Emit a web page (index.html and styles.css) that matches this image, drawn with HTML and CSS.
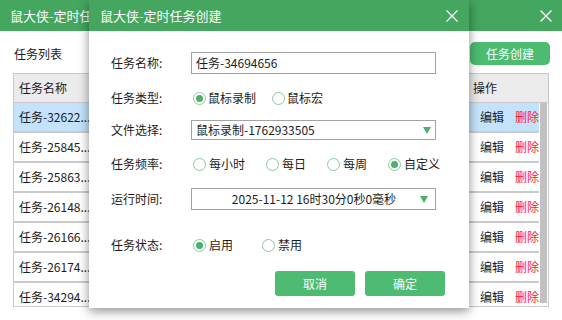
FILE: index.html
```html
<!DOCTYPE html>
<html lang="zh-CN">
<head>
  <meta charset="UTF-8" />
  <meta name="viewport" content="width=device-width, initial-scale=1.0">
  <title>鼠大侠-定时任务</title>
  <link rel="stylesheet" href="styles.css">
</head>

<body>

  <div class="window">
    <div class="titlebar">
      <span>鼠大侠-定时任务</span>
      <svg class="close" viewBox="0 0 12 12"><path d="M0.5 0.5 L11.5 11.5 M11.5 0.5 L0.5 11.5" /></svg>
    </div>

    <div class="toolbar">
      <span>任务列表</span>
      <button class="btn btn-create">任务创建</button>
    </div>

    <div class="table">
      <div class="thead">
        <div class="cell name">任务名称</div>
        <div class="cell ops">操作</div>
      </div>
      <div class="tbody">
        <div class="rows">
          <div class="row selected"><div class="cell name">任务-32622...</div><div class="cell ops"><span>编辑</span><span class="del">删除</span></div></div>
          <div class="row"><div class="cell name">任务-25845...</div><div class="cell ops"><span>编辑</span><span class="del">删除</span></div></div>
          <div class="row"><div class="cell name">任务-25863...</div><div class="cell ops"><span>编辑</span><span class="del">删除</span></div></div>
          <div class="row"><div class="cell name">任务-26148...</div><div class="cell ops"><span>编辑</span><span class="del">删除</span></div></div>
          <div class="row"><div class="cell name">任务-26166...</div><div class="cell ops"><span>编辑</span><span class="del">删除</span></div></div>
          <div class="row"><div class="cell name">任务-26174...</div><div class="cell ops"><span>编辑</span><span class="del">删除</span></div></div>
          <div class="row"><div class="cell name">任务-34294...</div><div class="cell ops"><span>编辑</span><span class="del">删除</span></div></div>
        </div>
        <div class="scrollbar"><div class="thumb"></div></div>
      </div>
    </div>
  </div>

  <!-- create dialog -->
  <div class="dialog">
    <div class="titlebar dialog-head">
      <span>鼠大侠-定时任务创建</span>
      <svg class="close" viewBox="0 0 12 12"><path d="M0.5 0.5 L11.5 11.5 M11.5 0.5 L0.5 11.5" /></svg>
    </div>

    <div class="form">
      <div class="field f-name">
        <label class="label">任务名称:</label>
        <div class="input">任务-34694656</div>
      </div>

      <div class="field f-type">
        <label class="label">任务类型:</label>
        <div class="radios gap-type">
          <span class="opt"><span class="radio checked"></span>鼠标录制</span>
          <span class="opt"><span class="radio"></span>鼠标宏</span>
        </div>
      </div>

      <div class="field f-file">
        <label class="label">文件选择:</label>
        <div class="input select">
          <span class="value">鼠标录制-1762933505</span>
          <span class="arrow"></span>
        </div>
      </div>

      <div class="field f-freq">
        <label class="label">任务频率:</label>
        <div class="radios gap-freq">
          <span class="opt"><span class="radio"></span>每小时</span>
          <span class="opt"><span class="radio"></span>每日</span>
          <span class="opt"><span class="radio"></span>每周</span>
          <span class="opt"><span class="radio checked"></span>自定义</span>
        </div>
      </div>

      <div class="field f-time">
        <label class="label">运行时间:</label>
        <div class="input select centered">
          <span class="value">2025-11-12 16时30分0秒0毫秒</span>
          <span class="arrow"></span>
        </div>
      </div>

      <div class="field f-state">
        <label class="label">任务状态:</label>
        <div class="radios gap-state">
          <span class="opt"><span class="radio checked"></span>启用</span>
          <span class="opt"><span class="radio"></span>禁用</span>
        </div>
      </div>

      <div class="actions">
        <button class="btn btn-wide">取消</button>
        <button class="btn btn-wide">确定</button>
      </div>
    </div>
  </div>

</body>
</html>
```

FILE: styles.css
```css
* {
  box-sizing: border-box;
}

body {
  margin: 0;
  width: 562px;
  height: 320px;
  overflow: hidden;
  position: relative;
  background: #fff;
  color: #1c1c1c;
  font-family: "Noto Sans CJK SC", sans-serif;
  font-size: 12px;
  line-height: 16px;
}

/* ---------- main window ---------- */
.titlebar {
  height: 31px;
  background: #45a65f;
  color: #fff;
  font-size: 13px;
  display: flex;
  align-items: center;
  justify-content: space-between;
  padding: 0 10px 0 10px;
}

.close {
  width: 12px;
  height: 12px;
  fill: none;
  stroke: #fff;
  stroke-width: 1.3;
}

.toolbar {
  display: flex;
  align-items: center;
  justify-content: space-between;
  height: 23px;
  margin: 11px 12px 8px 14px;
}

.btn {
  border: none;
  padding: 0;
  background: #4dbb71;
  color: #fff;
  font-family: inherit;
  font-size: 12px;
  border-radius: 4px;
}

.btn-create {
  width: 80px;
  height: 23px;
  border-radius: 5px;
}

.table {
  margin-left: 13px;
  width: 536px;
}

.thead {
  display: flex;
  height: 30px;
  align-items: center;
  background: #ebebeb;
  border: 1px solid #c9c9c9;
}

.thead .name {
  width: 454px;
  padding-left: 5px;
}

.thead .ops {
  padding-left: 5px;
}

.tbody {
  display: flex;
  height: 204px;
  border: 1px solid #c9c9c9;
  border-top: none;
}

.rows {
  flex: 1;
  overflow: hidden;
}

.row {
  display: flex;
  align-items: center;
  height: 30px;
  border-bottom: 2px solid #cbcbcb;
  white-space: nowrap;
}

.row.selected {
  background: #c4e2fb;
}

.row .name {
  width: 454px;
  padding-left: 5px;
}

.row .ops {
  display: flex;
  gap: 11px;
  padding-left: 13px;
}

.del {
  color: #ff2020;
}

.scrollbar {
  width: 9px;
  padding: 0 0 3px 1px;
}

.thumb {
  width: 7px;
  height: 100%;
  background: #c1c1c1;
}

/* ---------- dialog ---------- */
.dialog {
  position: absolute;
  left: 89px;
  top: 0;
  width: 380px;
  height: 308px;
  background: #fff;
  box-shadow: 0 3px 10px rgba(0, 0, 0, 0.45);
  display: flex;
  flex-direction: column;
}

.dialog-head {
  padding: 0 11px 0 11px;
}

.form {
  display: flex;
  flex-direction: column;
  padding: 21px 0 0 22px;
}

.field {
  display: flex;
  align-items: center;
  height: 22px;
}

.f-type,
.f-freq,
.f-time {
  margin-top: 13px;
}

.f-file {
  margin-top: 11px;
  height: 20px;
}

.f-state {
  margin-top: 24px;
}

.label {
  width: 80px;
}

.input {
  width: 245px;
  height: 100%;
  border: 1px solid #a3a3a3;
  padding-left: 4px;
  display: flex;
  align-items: center;
}

.select .value {
  flex: 1;
}

.select .arrow {
  width: 0;
  height: 0;
  margin-right: 4px;
  border-top: 7px solid #4caf6a;
  border-left: 4.5px solid transparent;
  border-right: 4.5px solid transparent;
}

.select.centered {
  padding-left: 16px;
}

.select.centered .value {
  text-align: center;
}

.select.centered .arrow {
  margin-right: 7px;
}

.radios {
  display: flex;
  align-items: center;
  margin-left: 2px;
}

.gap-type { gap: 16px; }
.gap-freq { gap: 21px; }
.gap-state { gap: 29px; }

.opt {
  display: flex;
  align-items: center;
  gap: 3px;
}

.gap-type .opt {
  gap: 2px;
}

.radio {
  width: 13px;
  height: 13px;
  border: 1px solid #86cb9d;
  border-radius: 50%;
  display: flex;
  align-items: center;
  justify-content: center;
}

.radio.checked::after {
  content: "";
  width: 7px;
  height: 7px;
  border-radius: 50%;
  background: #4caf6a;
}

.actions {
  display: flex;
  justify-content: flex-end;
  gap: 10px;
  margin-top: 15px;
  padding-right: 24px;
}

.btn-wide {
  width: 80px;
  height: 25px;
  border-radius: 3px;
}
```
